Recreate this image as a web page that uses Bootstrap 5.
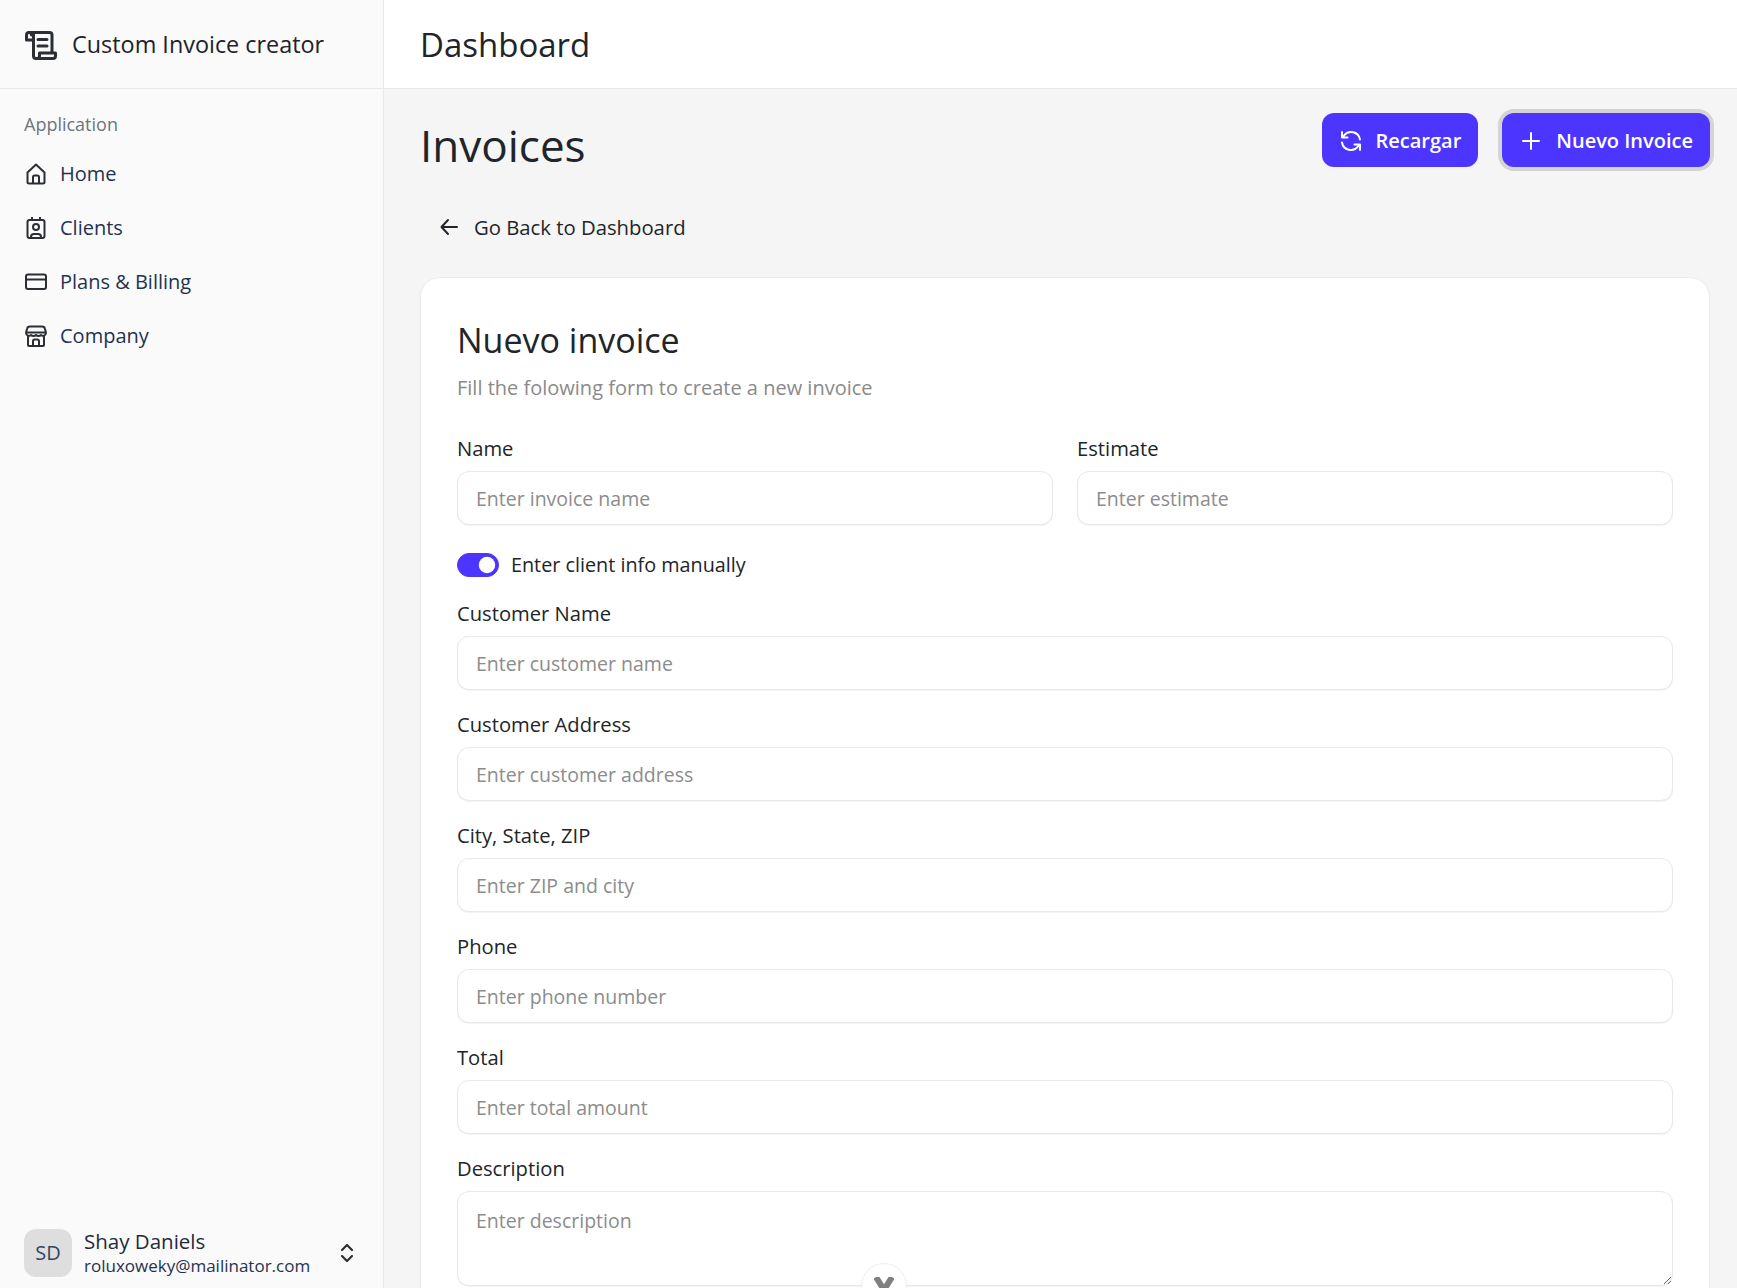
<!DOCTYPE html>
<html lang="en">
<head>
  <meta charset="UTF-8" />
  <meta name="viewport" content="width=device-width, initial-scale=1.0"/>
  <title>Custom Invoice creator</title>
  <link href="https://cdn.jsdelivr.net/npm/bootstrap@5.3.3/dist/css/bootstrap.min.css" rel="stylesheet">
  <style>
    html, body { height: 100%; overflow: hidden; }
    body { font-family: "Open Sans", "Noto Sans", sans-serif; font-size: 20px; color: #212529; background: #f5f5f5; }
    .app-shell { height: 1288px; overflow: hidden; }
    .side-bar { width: 384px; flex: 0 0 384px; background: #fafafa; border-right: 1px solid #e9e9e9; }
    .brand-row { height: 89px; padding: 2px 25px 0; border-bottom: 1px solid #e9e9e9; font-size: 23.4px; font-weight: 500; color: #1f2328; gap: 15px; }
    .side-label { font-size: 18px; color: #6c757d; margin: 22px 24px 10px; line-height: 26px; }
    .side-link { height: 54px; padding: 0 25px; gap: 13px; font-size: 20px; color: #1f3350; text-decoration: none; }
    .user-row { padding: 0 29px 0 24px; height: 70px; gap: 12px; }
    .avatar-box { width: 48px; height: 48px; border-radius: 12px; background: #dedede; color: #33485f; font-size: 20px; }
    .user-name { font-size: 20.5px; font-weight: 500; line-height: 25px; color: #1f2a3a; }
    .user-mail { font-size: 17px; line-height: 23px; color: #1f3350; }
    .main-area { min-width: 0; }
    .top-bar { height: 89px; padding: 2px 36px 0; background: #fff; border-bottom: 1px solid #e9e9e9; font-size: 33px; font-weight: 500; color: #212529; }
    .page-body { padding: 24px 27px 0 36px; }
    .page-title { font-size: 44px; font-weight: 500; margin: 5px 0 0; line-height: 54px; }
    .btn-invoice { height: 54px; border-radius: 12px; background: #4c35ff; border: 0; color: #fff; font-size: 20px; font-weight: 600; padding: 2px 17px 0 18px; gap: 14px; }
    .btn-invoice:hover { background: #4c35ff; color: #fff; }
    .btn-ring { box-shadow: 0 0 0 4px #d4d4d4; }
    .back-link { margin: 28px 0 0 20px; height: 54px; gap: 16px; font-size: 20.3px; color: #212529; text-decoration: none; font-weight: 500; }
    .form-panel { margin-top: 23px; padding: 40px 36px 0; background: #fff; border: 1px solid #ececec; border-radius: 20px; box-shadow: 0 1px 2px rgba(0,0,0,.04); height: 1100px; }
    .panel-title { font-size: 34px; font-weight: 500; line-height: 44px; margin: 0; }
    .panel-sub { font-size: 20px; color: #8a8a8a; line-height: 30px; margin: 11px 0 33px; }
    .field-label { font-size: 20.2px; font-weight: 500; line-height: 24px; margin-bottom: 11px; display: block; color: #212529; }
    .form-control.field-input { height: 54px; border: 1px solid #e8e8e8; border-radius: 12px; padding: 0 18px; font-size: 19.5px; box-shadow: 0 1px 1px rgba(0,0,0,.05); }
    .field-input::placeholder { color: #8c8c8c; }
    .field-block { margin-bottom: 22px; }
    .form-control.field-area { height: 95px; padding: 14px 18px; }
    .switch-row { margin: 25px 0 21px; gap: 12px; font-size: 19.8px; line-height: 30px; padding-left: 0; }
    .form-switch .form-check-input.switch-input { width: 42px; height: 24px; margin: 0; background-color: #4c35ff; border-color: #4c35ff; }
    .scroll-down { position: absolute; left: 861px; top: 1263px; width: 46px; height: 46px; background: #fff; border: 1px solid #eee; border-radius: 50%; z-index: 5; }
    .scroll-mark { margin-top: 13px; }
  </style>
</head>
<body>
  <div class="app-shell d-flex position-relative">

    <aside class="side-bar d-flex flex-column">
      <div class="brand-row d-flex align-items-center">
        <svg width="32" height="29" viewBox="0 0 32 29" fill="none" stroke="#2b2f33" stroke-width="3" stroke-linecap="round" stroke-linejoin="round"><path d="M8.500 9H1.500V4a2.500 2.500 0 0 1 5 0"/><path d="M4 1.500h20.500A2.500 2.500 0 0 1 27 4v17"/><path d="M8.500 3.500V25a2.500 2.500 0 0 0 2.500 2.500h17a2.500 2.500 0 0 0 2.500-2.500v-3H14.500v3a2.500 2.500 0 0 1-2.500 2.500"/><path d="M13 8.500h9M13 15h9"/></svg>
        <span>Custom Invoice creator</span>
      </div>
      <div class="side-label">Application</div>
      <a class="side-link d-flex align-items-center" href="#">
        <svg width="22" height="22" viewBox="0 0 22 22" fill="none" stroke="#2b2f33" stroke-width="2" stroke-linejoin="round"><path d="M2.500 9.500 11 1.500l8.500 8V19a1.500 1.500 0 0 1-1.500 1.500H4A1.500 1.500 0 0 1 2.500 19z"/><path d="M8 20.500V14a1.500 1.500 0 0 1 1.500-1.500h3A1.500 1.500 0 0 1 14 14v6.500"/></svg>
        <span>Home</span>
      </a>
      <a class="side-link d-flex align-items-center" href="#">
        <svg width="22" height="22" viewBox="0 0 22 22" fill="none" stroke="#2b2f33" stroke-width="2" stroke-linejoin="round"><rect x="2.500" y="3" width="17" height="18" rx="2"/><circle cx="11" cy="10" r="3"/><path d="M6 21v-1a3 3 0 0 1 3-3h4a3 3 0 0 1 3 3v1M7 0v3M15 0v3"/></svg>
        <span>Clients</span>
      </a>
      <a class="side-link d-flex align-items-center" href="#">
        <svg width="22" height="22" viewBox="0 0 22 22" fill="none" stroke="#2b2f33" stroke-width="2" stroke-linejoin="round"><rect x="1" y="3.500" width="20" height="14.500" rx="2"/><path d="M1 8.500h20"/></svg>
        <span>Plans &amp; Billing</span>
      </a>
      <a class="side-link d-flex align-items-center" href="#">
        <svg width="22" height="22" viewBox="0 0 22 22" fill="none" stroke="#2b2f33" stroke-width="2" stroke-linejoin="round"><path d="M5 1.500h12a3 3 0 0 1 3 2.500l1 4a3 3 0 0 1-5 2 3.500 3.500 0 0 1-5 0 3.500 3.500 0 0 1-5 0 3 3 0 0 1-5-2l1-4a3 3 0 0 1 3-2.500z"/><path d="M1 7.500h20M3 11v9a1 1 0 0 0 1 1h14a1 1 0 0 0 1-1v-9"/><path d="M8 21v-5a1.500 1.500 0 0 1 1.500-1.500h3A1.500 1.500 0 0 1 14 16v5"/></svg>
        <span>Company</span>
      </a>
      <div class="user-row d-flex align-items-center mt-auto">
        <div class="avatar-box d-flex align-items-center justify-content-center flex-shrink-0">SD</div>
        <div class="flex-grow-1">
          <div class="user-name">Shay Daniels</div>
          <div class="user-mail">roluxoweky@mailinator.com</div>
        </div>
        <svg width="14" height="20" viewBox="0 0 14 20" fill="none" stroke="#2b2f33" stroke-width="2.200" stroke-linecap="round" stroke-linejoin="round"><path d="M2 7l5-5 5 5M2 13l5 5 5-5"/></svg>
      </div>
    </aside>

    <main class="main-area flex-grow-1">
      <div class="top-bar d-flex align-items-center">Dashboard</div>
      <div class="page-body">
        <div class="d-flex align-items-start justify-content-between">
          <h1 class="page-title">Invoices</h1>
          <div class="d-flex gap-4">
            <button class="btn btn-invoice d-flex align-items-center" type="button">
              <svg width="22" height="22" viewBox="0 0 22 22" fill="none" stroke="#fff" stroke-width="2" stroke-linecap="round" stroke-linejoin="round"><path d="M20 9.500A9 9 0 0 0 4 5.500L2.500 7.500M2 2v5.500h5.500"/><path d="M2 12.500a9 9 0 0 0 16 4l1.500-2M20 20v-5.500h-5.500"/></svg>
              <span>Recargar</span>
            </button>
            <button class="btn btn-invoice btn-ring d-flex align-items-center" type="button">
              <svg width="22" height="22" viewBox="0 0 22 22" fill="none" stroke="#fff" stroke-width="2" stroke-linecap="round"><path d="M11 3v16M3 11h16"/></svg>
              <span>Nuevo Invoice</span>
            </button>
          </div>
        </div>

        <a class="back-link d-inline-flex align-items-center" href="#">
          <svg width="18" height="18" viewBox="0 0 18 18" fill="none" stroke="#212529" stroke-width="2" stroke-linecap="round" stroke-linejoin="round"><path d="M17 9H1.500M8 2 1.500 9 8 16"/></svg>
          <span>Go Back to Dashboard</span>
        </a>

        <section class="form-panel">
          <h2 class="panel-title">Nuevo invoice</h2>
          <p class="panel-sub">Fill the folowing form to create a new invoice</p>
          <form>
            <div class="row gx-4">
              <div class="col-6">
                <label class="field-label">Name</label>
                <input class="form-control field-input" type="text" placeholder="Enter invoice name">
              </div>
              <div class="col-6">
                <label class="field-label">Estimate</label>
                <input class="form-control field-input" type="text" placeholder="Enter estimate">
              </div>
            </div>
            <div class="switch-row form-check form-switch d-flex align-items-center">
              <input class="form-check-input switch-input" type="checkbox" role="switch" checked>
              <span class="d-block">Enter client info manually</span>
            </div>
            <div class="field-block">
              <label class="field-label">Customer Name</label>
              <input class="form-control field-input" type="text" placeholder="Enter customer name">
            </div>
            <div class="field-block">
              <label class="field-label">Customer Address</label>
              <input class="form-control field-input" type="text" placeholder="Enter customer address">
            </div>
            <div class="field-block">
              <label class="field-label">City, State, ZIP</label>
              <input class="form-control field-input" type="text" placeholder="Enter ZIP and city">
            </div>
            <div class="field-block">
              <label class="field-label">Phone</label>
              <input class="form-control field-input" type="text" placeholder="Enter phone number">
            </div>
            <div class="field-block">
              <label class="field-label">Total</label>
              <input class="form-control field-input" type="text" placeholder="Enter total amount">
            </div>
            <div class="field-block">
              <label class="field-label">Description</label>
              <textarea class="form-control field-input field-area" placeholder="Enter description"></textarea>
            </div>
          </form>
        </section>
      </div>
    </main>

    <div class="scroll-down d-flex justify-content-center">
      <svg class="scroll-mark" width="20" height="14" viewBox="0 0 20 14" fill="none" stroke="#808080" stroke-width="6"><path d="M2 0l8 13L18 0"/></svg>
    </div>
  </div>
</body>
</html>
